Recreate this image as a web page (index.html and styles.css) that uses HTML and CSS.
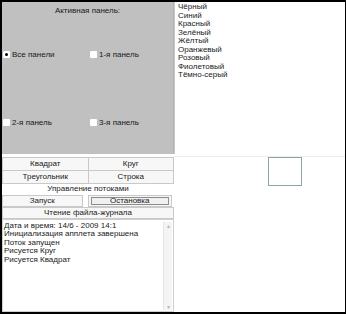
FILE: index.html
```html
<!DOCTYPE html>
<html lang="ru">
<head>
    <meta charset="UTF-8">
    <title>Апплет</title>
    <link rel="stylesheet" href="styles.css">
</head>
<body>
    <div class="applet">
        <div class="panel">
            <div class="panel-title">Активная панель:</div>
            <div class="panel-grid">
                <label class="radio-item"><span class="radio checked"></span>Все панели</label>
                <label class="radio-item"><span class="radio"></span>1-я панель</label>
                <label class="radio-item lower"><span class="radio"></span>2-я панель</label>
                <label class="radio-item lower"><span class="radio"></span>3-я панель</label>
            </div>
        </div>

        <div class="colors">
            <div>Чёрный</div>
            <div>Синий</div>
            <div>Красный</div>
            <div>Зелёный</div>
            <div>Жёлтый</div>
            <div>Оранжевый</div>
            <div>Розовый</div>
            <div>Фиолетовый</div>
            <div>Тёмно-серый</div>
        </div>

        <div class="controls">
            <div class="btn-row">
                <div class="btn">Квадрат</div>
                <div class="btn">Круг</div>
            </div>
            <div class="btn-row">
                <div class="btn">Треугольник</div>
                <div class="btn">Строка</div>
            </div>
            <div class="label">Управление потоками</div>
            <div class="btn-row threads">
                <div class="btn">Запуск</div>
                <div class="btn focused"><span>Остановка</span></div>
            </div>
            <div class="btn wide">Чтение файла-журнала</div>
            <div class="log">
                <div class="log-text">
                    <div>Дата и время: 14/6 - 2009 14:1</div>
                    <div>Инициализация апплета завершена</div>
                    <div>Поток запущен</div>
                    <div>Рисуется Круг</div>
                    <div>Рисуется Квадрат</div>
                </div>
                <div class="scrollbar">
                    <span class="arrow">&#9652;</span>
                    <span class="arrow">&#9662;</span>
                </div>
            </div>
        </div>

        <div class="canvas">
            <div class="square"></div>
        </div>
    </div>
</body>
</html>
```

FILE: styles.css
```css
body {
    margin: 0;
    font-family: 'Liberation Sans', Arial, sans-serif;
    font-size: 8px;
    color: #1a1a1a;
    background: white;
    overflow: hidden;
}
.applet {
    width: 346px;
    height: 314px;
    box-sizing: border-box;
    border: 2px solid #000;
    border-right-width: 1px;
    display: grid;
    grid-template-columns: 172px 1fr;
    grid-template-rows: 152px 1fr;
    background: white;
}

/* Active panel chooser */
.panel {
    background: #c0c0c0;
    display: flex;
    flex-direction: column;
    border-right: 1px solid #b4b4b4;
}
.panel-title {
    text-align: center;
    padding-top: 4px;
    height: 14px;
}
.panel-grid {
    flex: 1;
    display: grid;
    grid-template-columns: 87px 1fr;
    grid-template-rows: 68px 1fr;
}
.radio-item {
    display: flex;
    align-items: center;
    gap: 2px;
    padding-left: 1px;
}
.radio-item.lower {
    padding-top: 2px;
}
.radio {
    width: 7px;
    height: 7px;
    background: white;
    border-radius: 1px;
    display: flex;
    align-items: center;
    justify-content: center;
}
.radio.checked::after {
    content: '';
    width: 3px;
    height: 3px;
    background: #000;
    border-radius: 50%;
}

/* Colour list */
.colors {
    padding: 1px 0 0 3px;
    line-height: 8.5px;
    border-left: 1px solid #c8c8c8;
}

/* Buttons and log */
.controls {
    display: flex;
    flex-direction: column;
    padding-top: 3px;
}
.btn-row {
    display: flex;
}
.btn {
    flex: 1;
    height: 12px;
    line-height: 12px;
    text-align: center;
    background: #f7f7f7;
    border: 1px solid #c9c9c9;
    margin: 0 0 -1px -1px;
}
.btn-row .btn:first-child {
    margin-left: 0;
}
.label {
    text-align: center;
    height: 12px;
    line-height: 12px;
}
.threads {
    gap: 5px;
    padding-right: 2px;
}
.threads .btn {
    height: 10px;
    line-height: 10px;
    margin-left: 0;
}
.threads .btn.focused {
    padding: 1px 2px;
    height: 8px;
    line-height: 8px;
}
.btn.focused span {
    display: block;
    border: 1px solid #8c8c8c;
    background: #f0f0f0;
    height: 6px;
    line-height: 6px;
}
.btn.wide {
    flex: none;
    margin: 1px 0 0 0;
    height: 10px;
    line-height: 10px;
}
.log {
    flex: 1;
    display: flex;
    border: 1px solid #cfcfcf;
}
.log-text {
    flex: 1;
    padding: 2px 0 0 1px;
    line-height: 8.4px;
}
.scrollbar {
    width: 8px;
    margin: 2px 1px 1px 0;
    background: #f4f4f4;
    border-left: 1px solid #e6e6e6;
    display: flex;
    flex-direction: column;
    justify-content: space-between;
    align-items: center;
    font-size: 6px;
    color: #b8b8b8;
}

/* Drawing area */
.canvas {
    position: relative;
    border-top: 1px solid #ececec;
    margin-top: 2px;
}
.square {
    position: absolute;
    left: 94px;
    top: 0;
    width: 32px;
    height: 27px;
    border: 1px solid #8fa3ab;
}
```
